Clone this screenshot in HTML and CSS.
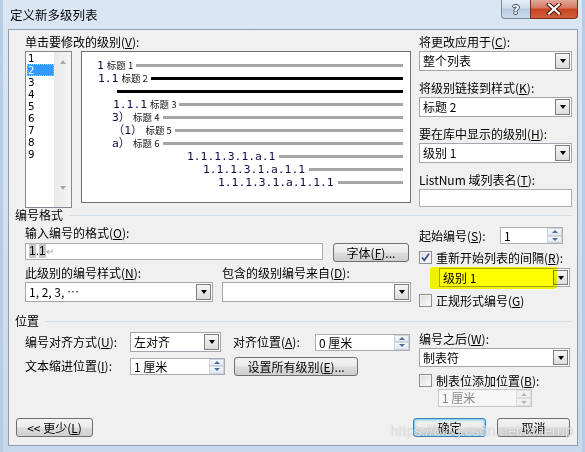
FILE: index.html
```html
<!DOCTYPE html>
<html lang="zh-CN">
<head>
    <meta charset="UTF-8">
    <title>定义新多级列表</title>
    <link rel="stylesheet" href="styles.css">
</head>
<body>

<div class="window">
    <div class="titlebar">
        <span class="title">定义新多级列表</span>
        <div class="caption-btns">
            <span class="cap-btn help">?</span>
            <span class="cap-btn close">
                <svg width="16" height="12" viewBox="0 0 16 12">
                    <path d="M3 1.5 L13 10.5 M13 1.5 L3 10.5" stroke="#4a1a10" stroke-width="4.2" stroke-linecap="square"/>
                    <path d="M3 1.5 L13 10.5 M13 1.5 L3 10.5" stroke="#fff" stroke-width="2.2" stroke-linecap="square"/>
                </svg>
            </span>
        </div>
    </div>

    <div class="client">
        <!-- уровни и предпросмотр -->
        <div class="top">
            <div class="levels">
                <div class="label">单击要修改的级别(<u>V</u>):</div>
                <div class="levels-row">
                    <div class="listbox">
                        <ul class="items">
                            <li>1</li>
                            <li class="sel">2</li>
                            <li>3</li>
                            <li>4</li>
                            <li>5</li>
                            <li>6</li>
                            <li>7</li>
                            <li>8</li>
                            <li>9</li>
                        </ul>
                        <div class="vscroll">
                            <span class="arr up"></span>
                            <span class="arr down"></span>
                        </div>
                    </div>
                    <div class="preview">
                        <div class="prow r1"><span class="num">1</span><span class="hd">标题 1</span><span class="line"></span></div>
                        <div class="prow r2"><span class="num">1.1</span><span class="hd">标题 2</span><span class="line dark"></span></div>
                        <div class="prow r3"><span class="line dark"></span></div>
                        <div class="prow r4"><span class="num">1.1.1</span><span class="hd">标题 3</span><span class="line"></span></div>
                        <div class="prow r5"><span class="num">3）</span><span class="hd">标题 4</span><span class="line"></span></div>
                        <div class="prow r6"><span class="num">（1）</span><span class="hd">标题 5</span><span class="line"></span></div>
                        <div class="prow r5"><span class="num">a）</span><span class="hd">标题 6</span><span class="line"></span></div>
                        <div class="prow r8"><span class="num">1.1.1.3.1.a.1</span><span class="line gap"></span></div>
                        <div class="prow r9"><span class="num">1.1.1.3.1.a.1.1</span><span class="line gap"></span></div>
                        <div class="prow r10"><span class="num">1.1.1.3.1.a.1.1.1</span><span class="line gap"></span></div>
                    </div>
                </div>
            </div>

            <div class="side">
                <div class="field">
                    <div class="label">将更改应用于(<u>C</u>):</div>
                    <div class="combo"><span class="val">整个列表</span><span class="drop"></span></div>
                </div>
                <div class="field">
                    <div class="label">将级别链接到样式(<u>K</u>):</div>
                    <div class="combo"><span class="val">标题 2</span><span class="drop"></span></div>
                </div>
                <div class="field">
                    <div class="label">要在库中显示的级别(<u>H</u>):</div>
                    <div class="combo"><span class="val">级别 1</span><span class="drop"></span></div>
                </div>
                <div class="field last">
                    <div class="label">ListNum 域列表名(<u>T</u>):</div>
                    <div class="textbox tall"></div>
                </div>
            </div>
        </div>

        <!-- формат номера -->
        <div class="group-title">编号格式</div>
        <div class="sec-body">
            <div class="left">
                <div class="label mt4">输入编号的格式(<u>O</u>):</div>
                <div class="input-row">
                    <div class="textbox fmt"><span class="fld">1</span>.<span class="fld">1</span><span class="ret">↵</span></div>
                    <span class="btn font-btn">字体(<u>F</u>)...</span>
                </div>
                <div class="label-row">
                    <span class="label w197">此级别的编号样式(<u>N</u>):</span>
                    <span class="label">包含的级别编号来自(<u>D</u>):</span>
                </div>
                <div class="combo-row">
                    <div class="combo w188"><span class="val">1, 2, 3, …</span><span class="drop"></span></div>
                    <div class="combo w189"><span class="val"></span><span class="drop"></span></div>
                </div>
            </div>
            <div class="right">
                <div class="start-row">
                    <span class="label">起始编号(<u>S</u>):</span>
                    <div class="spin w63"><span class="val">1</span><span class="arrows"><span class="half"><i class="tri up"></i></span><span class="half"><i class="tri down"></i></span></span></div>
                </div>
                <div class="check-row">
                    <span class="check on">
                        <svg width="11" height="11" viewBox="0 0 11 11"><path d="M2 5.5 L4.3 8.3 L9 1.8" fill="none" stroke="#3d5186" stroke-width="1.8"/></svg>
                    </span>
                    <span class="label">重新开始列表的间隔(<u>R</u>):</span>
                </div>
                <div class="hl-wrap">
                    <div class="combo w131"><span class="val">级别 1</span><span class="drop"></span></div>
                    <span class="marker"></span>
                </div>
                <div class="check-row">
                    <span class="check"></span>
                    <span class="label">正规形式编号(<u>G</u>)</span>
                </div>
            </div>
        </div>

        <!-- положение -->
        <div class="group-title mt7">位置</div>
        <div class="sec-body">
            <div class="left">
                <div class="pos-row">
                    <span class="label w105">编号对齐方式(<u>U</u>):</span>
                    <div class="combo w91"><span class="val">左对齐</span><span class="drop"></span></div>
                    <span class="label w82 ml12">对齐位置(<u>A</u>):</span>
                    <div class="spin w95"><span class="val">0 厘米</span><span class="arrows"><span class="half"><i class="tri up"></i></span><span class="half"><i class="tri down"></i></span></span></div>
                </div>
                <div class="pos-row">
                    <span class="label w105">文本缩进位置(<u>I</u>):</span>
                    <div class="spin w95"><span class="val">1 厘米</span><span class="arrows"><span class="half"><i class="tri up"></i></span><span class="half"><i class="tri down"></i></span></span></div>
                    <span class="btn all-btn">设置所有级别(<u>E</u>)...</span>
                </div>
            </div>
            <div class="right">
                <div class="label mt4">编号之后(<u>W</u>):</div>
                <div class="combo w151 mt2"><span class="val">制表符</span><span class="drop"></span></div>
                <div class="check-row">
                    <span class="check"></span>
                    <span class="label">制表位添加位置(<u>B</u>):</span>
                </div>
                <div class="spin w94 disabled"><span class="val">1 厘米</span><span class="arrows"><span class="half"><i class="tri up"></i></span><span class="half"><i class="tri down"></i></span></span></div>
            </div>
        </div>

        <div class="footer">
            <span class="btn less-btn">&lt;&lt; 更少(<u>L</u>)</span>
            <span class="btn ok-btn">确定</span>
            <span class="btn cancel-btn">取消</span>
        </div>

        <span class="watermark">https://blog.csdn.net/tauerup</span>
    </div>
</div>

</body>
</html>
```

FILE: styles.css
```css
* {
    box-sizing: border-box;
}
body {
    margin: 0;
    font-family: "Noto Sans CJK SC", sans-serif;
    font-size: 12px;
    color: #000;
}
u {
    text-decoration: underline;
}
.window {
    width: 585px;
    height: 452px;
    padding: 0 7px 0 8px;
    background: linear-gradient(#dae6f3, #c8d9ed);
    box-shadow: inset 3px 0 0 #b7cde6, inset -3px 0 0 #b7cde6;
}
.titlebar {
    height: 29px;
    display: flex;
    justify-content: space-between;
    align-items: flex-start;
}
.title {
    margin-top: 7px;
    padding-left: 2px;
    line-height: 16px;
    font-size: 12.5px;
}
.caption-btns {
    display: flex;
}
.cap-btn {
    height: 19px;
    display: flex;
    align-items: center;
    justify-content: center;
}
.help {
    width: 29px;
    border: 1px solid #7a8aa0;
    border-top: none;
    border-right: none;
    border-radius: 0 0 0 4px;
    background: linear-gradient(#e8eef6, #cfdcec 45%, #b9cbe1 50%, #cddbeb);
    color: #fff;
    font-family: "DejaVu Sans", sans-serif;
    font-weight: bold;
    font-size: 13px;
    text-shadow: 1px 0 0 #3d4a5c, -1px 0 0 #3d4a5c, 0 1px 0 #3d4a5c, 0 -1px 0 #3d4a5c;
}
.close {
    width: 48px;
    border: 1px solid #7b2c1d;
    border-top: none;
    border-radius: 0 0 4px 0;
    background: linear-gradient(#e4a797, #d57761 45%, #c5431f 50%, #d0603f);
}

.client {
    position: relative;
    height: 417px;
    border: 1px solid #8e9db0;
    background: #f0f0f0;
    padding: 5px 5px 0 6px;
}
.label {
    height: 14px;
    line-height: 14px;
    white-space: nowrap;
}

/* верхняя часть */
.top {
    display: flex;
    gap: 8px;
    margin-left: 10px;
}
.levels {
    width: 386px;
}
.levels .label {
    margin-bottom: 2px;
}
.levels-row {
    display: flex;
    gap: 9px;
    align-items: flex-start;
}
.listbox {
    width: 47px;
    height: 157px;
    border: 1px solid #828790;
    background: #fff;
    display: flex;
}
.items {
    list-style: none;
    margin: 0;
    padding: 0 0 0 1px;
    flex: 1;
    font-family: "DejaVu Sans", sans-serif;
    font-size: 10.3px;
}
.items li {
    height: 12px;
    line-height: 12px;
    padding-left: 1px;
    overflow: hidden;
}
.items li.sel {
    background: #3399ff;
    color: #fff;
    outline: 1px dotted #e8b860;
    outline-offset: -1px;
}
.vscroll {
    width: 17px;
    background: linear-gradient(90deg, #e9e9e9, #f5f5f5);
    display: flex;
    flex-direction: column;
    justify-content: space-between;
    align-items: center;
    padding: 8px 0 17px;
}
.arr {
    width: 0;
    height: 0;
    border-left: 3.5px solid transparent;
    border-right: 3.5px solid transparent;
}
.arr.up {
    border-bottom: 4px solid #a6a6a6;
}
.arr.down {
    border-top: 4px solid #a6a6a6;
}

.preview {
    width: 330px;
    height: 152px;
    border: 1px solid #707070;
    background: #fff;
    padding: 7px 7px 0 0;
}
.prow {
    display: flex;
    align-items: center;
    height: 13px;
}
.r1 { padding-left: 15px; }
.r2 { padding-left: 16px; }
.r3 { padding-left: 35px; }
.r4 { padding-left: 31px; }
.r5 { padding-left: 30px; }
.r6 { padding-left: 31px; }
.r8 { padding-left: 105px; }
.r9 { padding-left: 121px; }
.r10 { padding-left: 136px; }
.num {
    font-family: "DejaVu Sans Mono", "Noto Sans CJK SC", monospace;
    font-size: 11.3px;
    color: #0c0c44;
    white-space: pre;
    line-height: 13px;
}
.hd {
    font-size: 9.5px;
    line-height: 13px;
    margin: 0 3px 0 3px;
    color: #111;
    white-space: pre;
}
.line {
    flex: 1;
    height: 3px;
    background: #a6a6a6;
}
.line.dark {
    background: #000;
}
.line.gap {
    margin-left: 4px;
}

.side {
    width: 153px;
}
.field {
    margin-bottom: 10px;
}
.field.last {
    margin-bottom: 0;
}
.field .label {
    margin-bottom: 2px;
}

/* элементы управления */
.combo {
    display: flex;
    height: 20px;
    padding: 1px;
    border: 1px solid #a2a7ae;
    background: #fff;
}
.combo .val {
    flex: 1;
    padding-left: 2px;
    line-height: 16px;
    white-space: pre;
}
.combo .drop {
    width: 15px;
    border: 1px solid #7d7d7d;
    background: linear-gradient(#f6f6f6, #dcdcdc);
    display: flex;
    align-items: center;
    justify-content: center;
}
.combo .drop::after {
    content: "";
    border-left: 3.5px solid transparent;
    border-right: 3.5px solid transparent;
    border-top: 4px solid #000;
}
.textbox {
    height: 17px;
    border: 1px solid #abadb3;
    background: #fff;
}
.textbox.tall {
    height: 18px;
}
.textbox.fmt {
    width: 298px;
    padding-left: 3px;
    line-height: 15px;
    font-family: "Liberation Sans", sans-serif;
    font-size: 12px;
}
.fld {
    background: #c8c8c8;
}
.ret {
    color: #a0a0a0;
    font-size: 10px;
}
.spin {
    display: flex;
    height: 17px;
    border: 1px solid #abadb3;
    background: #fff;
}
.spin .val {
    flex: 1;
    padding-left: 3px;
    line-height: 15px;
}
.spin .arrows {
    width: 15px;
    display: flex;
    flex-direction: column;
}
.spin .half {
    flex: 1;
    border: 1px solid #cdd4dc;
    background: linear-gradient(#f7f9fb, #e1e7ee);
    display: flex;
    align-items: center;
    justify-content: center;
}
.tri {
    border-left: 3px solid transparent;
    border-right: 3px solid transparent;
}
.tri.up {
    border-bottom: 3px solid #4f6b99;
}
.tri.down {
    border-top: 3px solid #4f6b99;
}
.spin.disabled {
    border-color: #c4c7cb;
    background: #f7f7f7;
    color: #8a8a8a;
}
.spin.disabled .half {
    border-color: #dcdcdc;
    background: #f0f0f0;
}
.spin.disabled .tri.up {
    border-bottom-color: #b4b4b4;
}
.spin.disabled .tri.down {
    border-top-color: #b4b4b4;
}
.btn {
    display: flex;
    align-items: center;
    justify-content: center;
    height: 19px;
    border: 1px solid #707070;
    border-radius: 3px;
    background: linear-gradient(#f3f3f3, #ebebeb 48%, #dddddd 52%, #cfcfcf);
    white-space: nowrap;
}
.check {
    width: 13px;
    height: 13px;
    border: 1px solid #8e8f8f;
    background: linear-gradient(135deg, #dcdcdc, #fbfbfb);
    box-shadow: inset 0 0 0 1px #f4f4f4;
    display: flex;
    align-items: center;
    justify-content: center;
}

/* группы */
.group-title {
    display: flex;
    align-items: center;
    height: 14px;
    line-height: 14px;
}
.group-title::after {
    content: "";
    flex: 1;
    height: 1px;
    margin-left: 6px;
    background: #d5dfe5;
}
.sec-body {
    display: flex;
    gap: 8px;
    margin-left: 10px;
    align-items: flex-start;
}
.left {
    width: 386px;
}
.right {
    width: 153px;
}
.mt2 { margin-top: 2px; }
.mt4 { margin-top: 4px; }
.mt7 { margin-top: 7px; }
.ml12 { margin-left: 12px; }
.w63 { width: 63px; }
.w82 { width: 82px; }
.w91 { width: 91px; }
.w94 { width: 94px; }
.w95 { width: 95px; }
.w105 { width: 105px; }
.w131 { width: 131px; }
.w151 { width: 151px; }
.w188 { width: 188px; }
.w189 { width: 189px; }
.w197 { width: 197px; display: inline-block; }

.input-row {
    display: flex;
    gap: 10px;
    margin-top: 3px;
    align-items: flex-start;
}
.font-btn {
    width: 76px;
}
.label-row {
    display: flex;
    margin-top: 4px;
}
.combo-row {
    display: flex;
    gap: 9px;
    margin-top: 2px;
}
.start-row {
    display: flex;
    align-items: center;
    margin-top: 5px;
}
.start-row .label {
    width: 81px;
}
.check-row {
    display: flex;
    align-items: center;
    gap: 4px;
    height: 13px;
    margin-top: 7px;
}
.hl-wrap {
    position: relative;
    margin: 4px 0 0 20px;
}
.hl-wrap .combo {
    height: 19px;
}
.marker {
    position: absolute;
    left: -9px;
    top: -1px;
    width: 127px;
    height: 22px;
    border-radius: 3px 1px 4px 2px;
    background: #ffff00;
    mix-blend-mode: multiply;
}
.pos-row {
    display: flex;
    align-items: center;
    height: 20px;
    margin-top: 4px;
}
.all-btn {
    width: 124px;
    margin-left: 9px;
}
.right .combo.w151 {
    height: 19px;
}
.spin.w94 {
    height: 18px;
    margin: 2px 0 0 19px;
}

.footer {
    display: flex;
    margin: 11px 2px 0 1px;
}
.less-btn {
    width: 77px;
    margin-right: auto;
}
.ok-btn {
    width: 73px;
    border-color: #3c7fb1;
    box-shadow: inset 0 0 0 1px #8fd3f5, inset 0 0 2px 2px rgba(120, 200, 240, 0.45);
}
.cancel-btn {
    width: 73px;
    margin-left: 11px;
}
.watermark {
    position: absolute;
    right: 4px;
    bottom: 6px;
    font-family: "Liberation Sans", sans-serif;
    font-size: 14.5px;
    color: rgba(255, 255, 255, 0.75);
    text-shadow: 0 0 1px rgba(0, 0, 0, 0.35);
}
```
